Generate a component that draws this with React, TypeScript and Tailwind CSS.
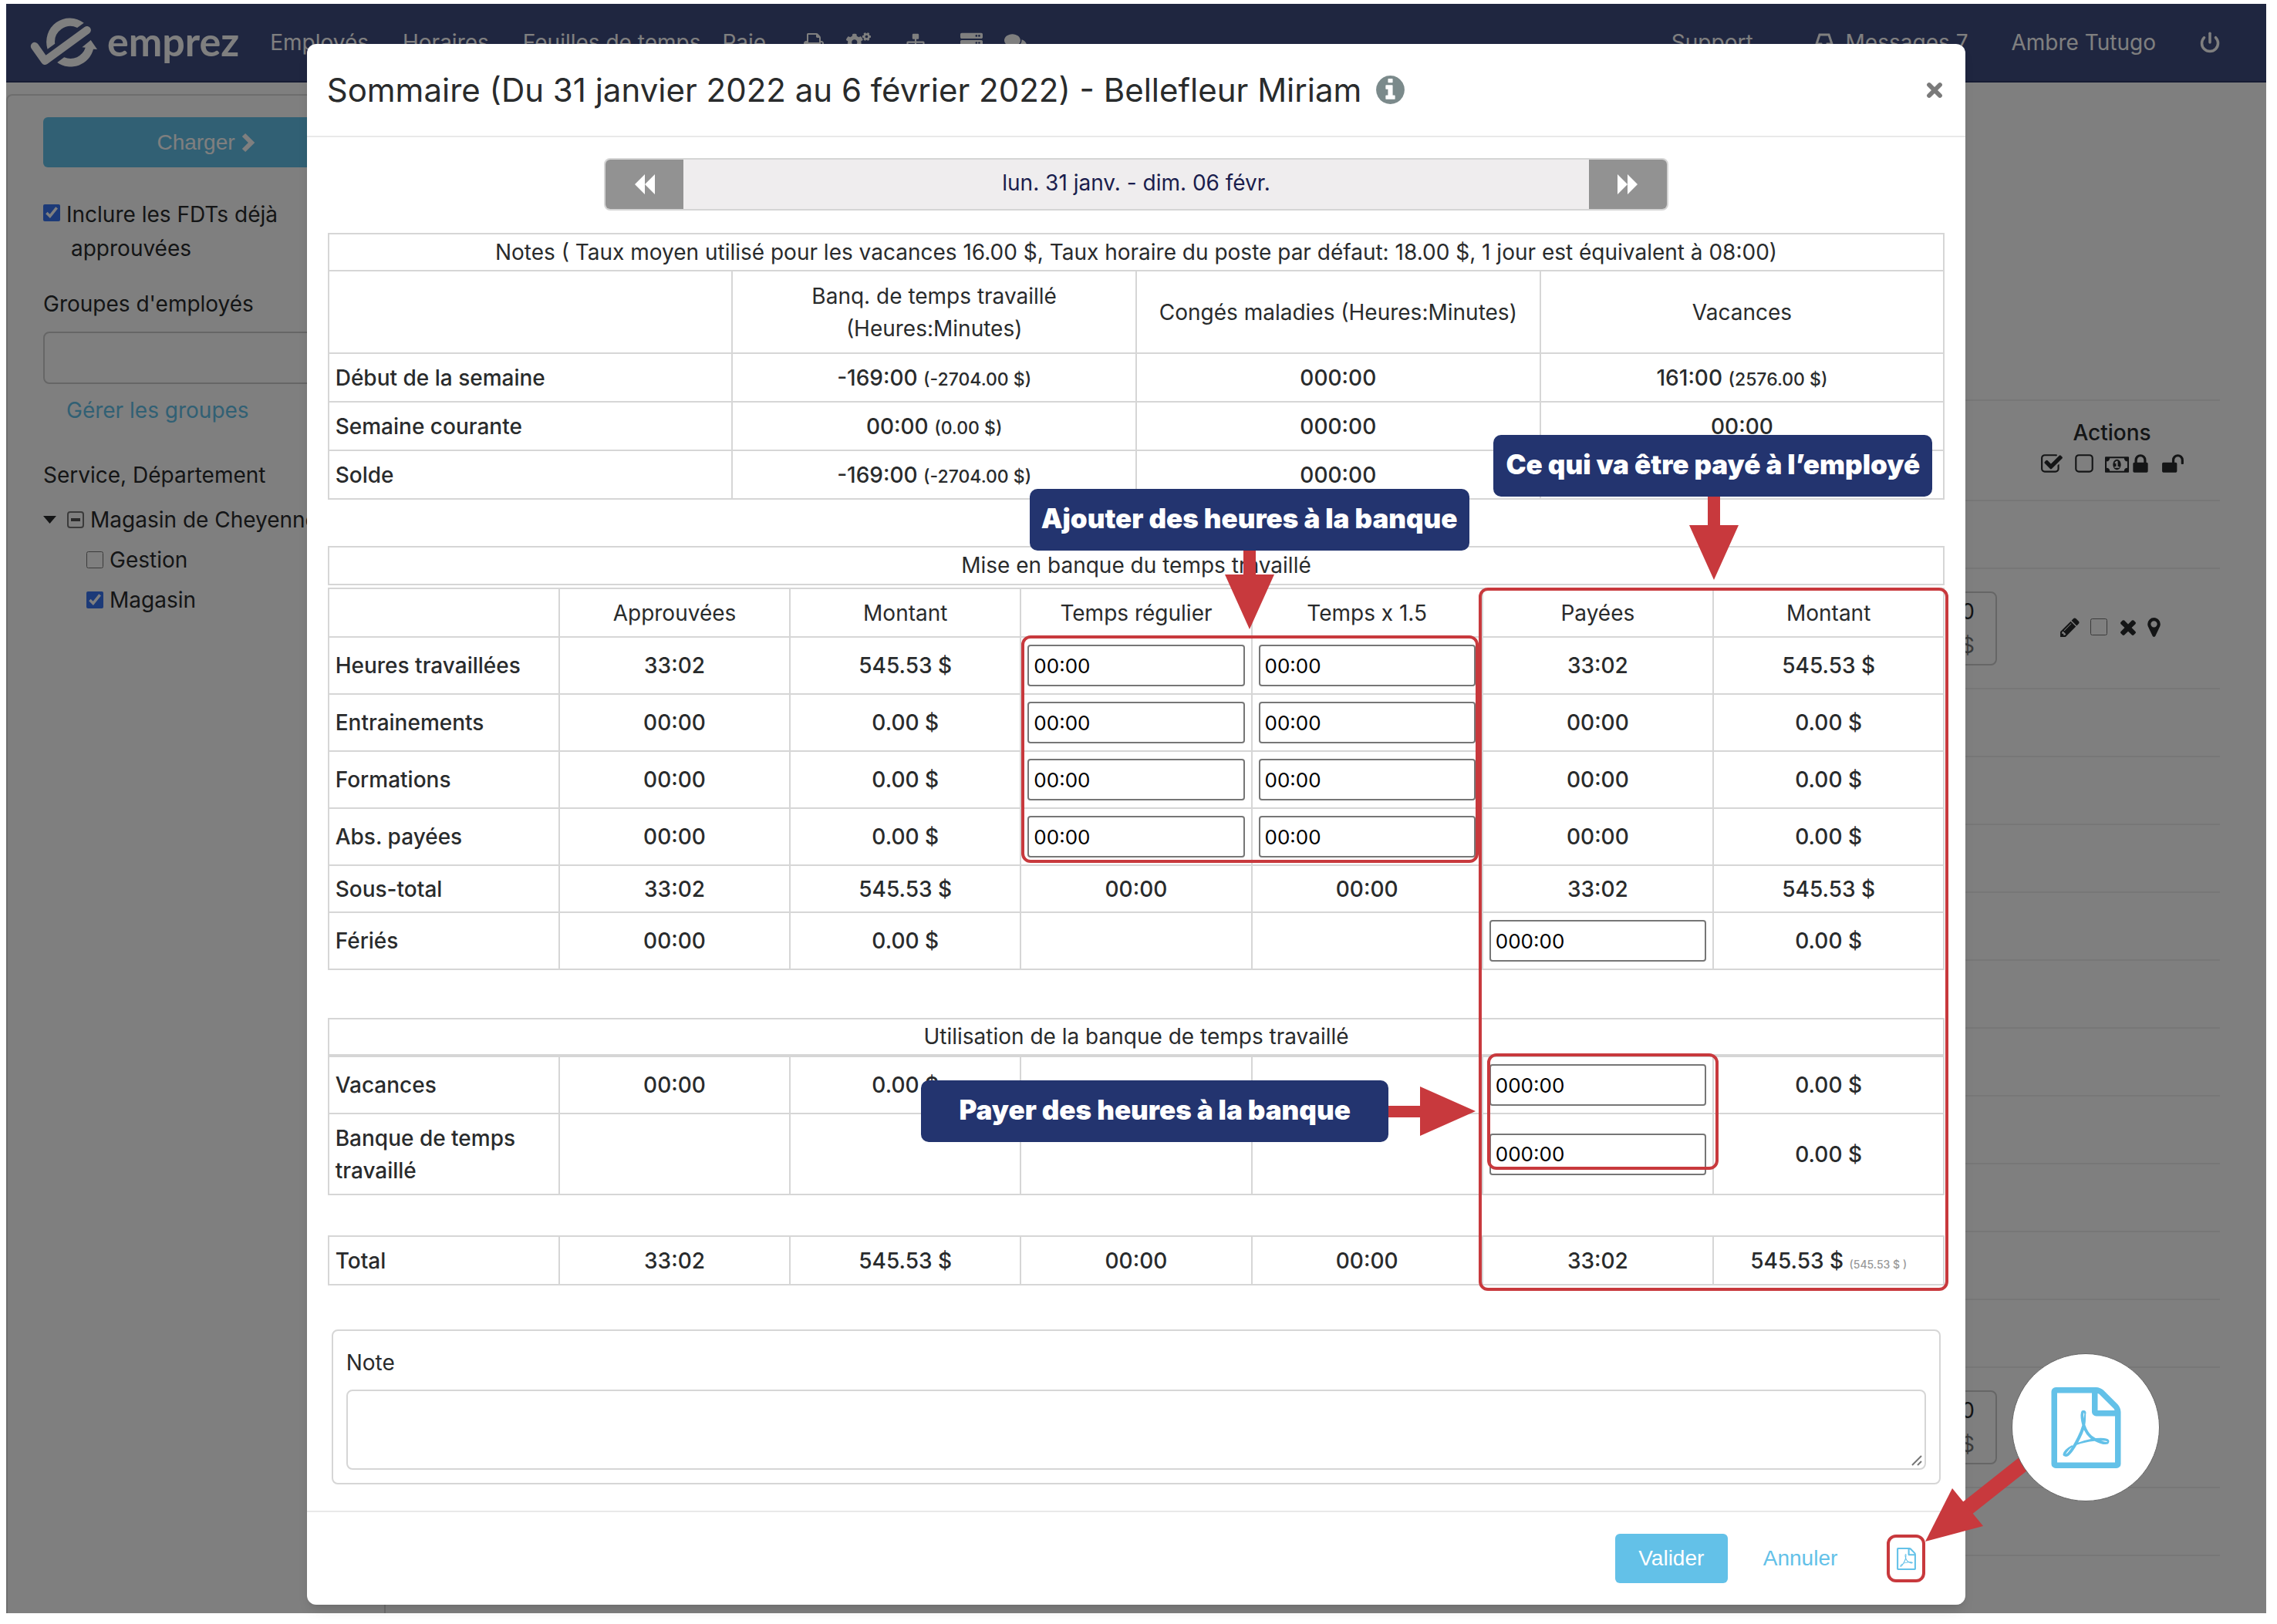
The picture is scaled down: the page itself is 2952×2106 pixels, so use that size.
import React from "react";
import type { ReactNode } from "react";
import { Power, X } from "lucide-react";
import { FaCogs, FaComments, FaServer, FaSitemap } from "react-icons/fa";

const ICONS = {
  checkSquare:
    "M1472 930v318q0 119-84.5 203.5t-203.5 84.5h-832q-119 0-203.5-84.5t-84.5-203.5v-832q0-119 84.5-203.5t203.5-84.5h832q63 0 117 25 15 7 18 23 3 17-9 29l-49 49q-10 10-23 10-3 0-9-2-23-6-45-6h-832q-66 0-113 47t-47 113v832q0 66 47 113t113 47h832q66 0 113-47t47-113v-254q0-13 9-22l64-64q10-10 23-10 6 0 12 3 20 8 20 29zm231-489l-814 814q-24 24-57 24t-57-24l-430-430q-24-24-24-57t24-57l110-110q24-24 57-24t57 24l263 263 647-647q24-24 57-24t57 24l110 110q24 24 24 57t-24 57z",
  square:
    "M1312 256h-832q-66 0-113 47t-47 113v832q0 66 47 113t113 47h832q66 0 113-47t47-113v-832q0-66-47-113t-113-47zm288 160v832q0 119-84.5 203.5t-203.5 84.5h-832q-119 0-203.5-84.5t-84.5-203.5v-832q0-119 84.5-203.5t203.5-84.5h832q119 0 203.5 84.5t84.5 203.5z",
  money:
    "M768 1152h384v-96h-128v-448h-114l-148 137 77 80q42-37 55-57h2v288h-128v96zm512-256q0 70-21 142t-59.5 134-101.5 101-138 39-138-39-101.5-101-59.5-134-21-142 21-142 59.5-134 101.5-101 138-39 138 39 101.5 101 59.5 134 21 142zm512 256v-512q-106 0-181-75t-75-181h-1152q0 106-75 181t-181 75v512q106 0 181 75t75 181h1152q0-106 75-181t181-75zm128-832v1152q0 26-19 45t-45 19h-1792q-26 0-45-19t-19-45v-1152q0-26 19-45t45-19h1792q26 0 45 19t19 45z",
  lock: "M640 768h512v-192q0-106-75-181t-181-75-181 75-75 181v192zm832 96v576q0 40-28 68t-68 28h-960q-40 0-68-28t-28-68v-576q0-40 28-68t68-28h32v-192q0-184 132-316t316-132 316 132 132 316v192h32q40 0 68 28t28 68z",
  unlock:
    "M1728 576v256q0 26-19 45t-45 19h-64q-26 0-45-19t-19-45v-256q0-106-75-181t-181-75-181 75-75 181v192h96q40 0 68 28t28 68v576q0 40-28 68t-68 28h-960q-40 0-68-28t-28-68v-576q0-40 28-68t68-28h672v-192q0-185 131.5-316.5t316.5-131.5 316.5 131.5 131.5 316.5z",
  pencil:
    "M491 1536l91-91-235-235-91 91v107h128v128h107zm523-928q0-22-22-22-10 0-17 7l-542 542q-7 7-7 17 0 22 22 22 10 0 17-7l542-542q7-7 7-17zm-54-192l416 416-832 832h-416v-416zm683 96q0 53-37 90l-166 166-416-416 166-165q36-38 90-38 53 0 91 38l235 234q37 39 37 91z",
  times:
    "M1490 1322q0 40-28 68l-136 136q-28 28-68 28t-68-28l-294-294-294 294q-28 28-68 28t-68-28l-136-136q-28-28-28-68t28-68l294-294-294-294q-28-28-28-68t28-68l136-136q28-28 68-28t68 28l294 294 294-294q28-28 68-28t68 28l136 136q28 28 28 68t-28 68l-294 294 294 294q28 28 28 68z",
  marker:
    "M1152 640q0-106-75-181t-181-75-181 75-75 181 75 181 181 75 181-75 75-181zm256 0q0 109-33 179l-364 774q-16 33-47.5 52t-67.5 19-67.5-19-46.5-52l-365-774q-33-70-33-179 0-212 150-362t362-150 362 150 150 362z",
  info: "M1152 1376v-160q0-14-9-23t-23-9h-96v-512q0-14-9-23t-23-9h-320q-14 0-23 9t-9 23v160q0 14 9 23t23 9h96v320h-96q-14 0-23 9t-9 23v160q0 14 9 23t23 9h448q14 0 23-9t9-23zm-128-896v-160q0-14-9-23t-23-9h-192q-14 0-23 9t-9 23v160q0 14 9 23t23 9h192q14 0 23-9t9-23zm640 416q0 209-103 385.5t-279.5 279.5-385.5 103-385.5-103-279.5-279.5-103-385.5 103-385.5 279.5-279.5 385.5-103 385.5 103 279.5 279.5 103 385.5z",
  print:
    "M448 1536h896v-256h-896v256zm0-640h896v-384h-160q-40 0-68-28t-28-68v-160h-640v640zm1152 64q0-26-19-45t-45-19-45 19-19 45 19 45 45 19 45-19 19-45zm128 0v416q0 13-9.500 22.500t-22.500 9.500h-224v160q0 40-28 68t-68 28h-960q-40 0-68-28t-28-68v-160h-224q-13 0-22.500-9.500t-9.500-22.500v-416q0-79 56.500-135.500t135.500-56.500h64v-544q0-40 28-68t68-28h672q40 0 88 20t76 48l152 152q28 28 48 76t20 88v256h64q79 0 135.500 56.500t56.500 135.500z",
  pdf: "M1596 380q28 28 48 76t20 88v1152q0 40-28 68t-68 28h-1344q-40 0-68-28t-28-68v-1600q0-40 28-68t68-28h896q40 0 88 20t76 48zm-444-244v376h376q-10-29-22-41l-313-313q-12-12-41-22zm384 1528v-1024h-416q-40 0-68-28t-28-68v-416h-768v1536h1280zm-514-593q33 26 84 56 59-7 117-7 147 0 177 49 16 22 2 52 0 1-1 2l-2 2v1q-6 38-71 38-48 0-115-20t-130-53q-221 24-392 83-153 262-242 262-15 0-28-7l-24-12q-1-1-6-5-10-10-6-36 9-40 56-91.5t132-96.5q14-9 23 6 2 2 2 4 52-85 107-197 68-136 104-262-24-82-30.5-159.5t6.5-127.5q11-40 42-40h22q23 0 35 15 18 21 9 68-2 6-4 8 1 3 1 8v30q-2 123-14 192 55 164 146 238zm-576 411q52-24 137-158-51 40-87.5 84t-49.500 74zm398-920q-15 42-2 132 1-7 7-44 0-3 7-43 1-4 4-8-1-1-1-2-1-2-1-3-1-22-13-36 0 1-1 2v2zm-124 661q135-54 284-81-2-1-13-9.5t-16-13.500q-76-67-127-176-27 86-83 197-30 56-45 83zm646-16q-24-24-140-24 76 28 124 28 14 0 18-1 0-1-2-3z",
};

function Glyph({ name, className, wide }: { name: keyof typeof ICONS; className: string; wide?: boolean }) {
  return (
    <svg viewBox={wide ? "0 0 1920 1792" : "0 0 1792 1792"} fill="currentColor" className={className} aria-hidden="true">
      <path d={ICONS[name]} />
    </svg>
  );
}

function Logo() {
  return (
    <a href="#" className="flex items-center gap-3 text-white" aria-label="emprez">
      <svg viewBox="115 65 265 195" className="h-[65px] w-[88px]" aria-hidden="true">
        <path
          d="M325 85 A91 93 0 0 0 183 187 L212 166 A61 61 0 0 1 299 104 Z"
          fill="currentColor"
        />
        <path
          d="M221 239 L248 219 A61 61 0 0 0 331 181 L318 180 L352 152 L377 188 L362 187 A91 91 0 0 1 221 239 Z"
          fill="currentColor"
        />
        <path
          d="M133 176 L173 233 L337 113"
          fill="none"
          stroke="currentColor"
          strokeWidth="31"
          strokeLinecap="round"
          strokeLinejoin="round"
        />
      </svg>
      <span className="-mt-1 font-['Lato',sans-serif] text-[52px] leading-[64px] font-bold">emprez</span>
    </a>
  );
}

function NavBar() {
  return (
    <header className="flex h-[102px] items-center justify-between border-b-2 border-[#2c3766] bg-[#3e4c80] pr-[59px] pl-[31px] text-white">
      <nav className="flex items-center">
        <Logo />
        <a href="#" className="ml-10">Employés</a>
        <a href="#" className="ml-11">Horaires</a>
        <a href="#" className="ml-11">Feuilles de temps</a>
        <a href="#" className="ml-7">Paie</a>
        <a href="#" className="ml-12" aria-label="Imprimer">
          <Glyph name="print" className="size-[28px]" />
        </a>
        <a href="#" className="ml-7" aria-label="Paramètres">
          <FaCogs className="size-[32px]" />
        </a>
        <a href="#" className="ml-11" aria-label="Organigramme">
          <FaSitemap className="size-[28px]" />
        </a>
        <a href="#" className="ml-11" aria-label="Serveur">
          <FaServer className="size-[29px]" />
        </a>
        <a href="#" className="ml-7" aria-label="Discussions">
          <FaComments className="size-[29px]" />
        </a>
      </nav>
      <nav className="flex items-center">
        <a href="#">Support</a>
        <a href="#" className="ml-20 flex items-center gap-4">
          <svg viewBox="0 0 24 24" className="size-[24px]" fill="none" stroke="currentColor" strokeWidth="3" aria-hidden="true">
            <path d="M2 22 V14 L6 2 H18 L22 14 V22 Z M2 14 H8 L9 17 H15 L16 14 H22" />
          </svg>
          Messages 7
        </a>
        <a href="#" className="ml-14">Ambre Tutugo</a>
        <button type="button" className="ml-14" aria-label="Déconnexion">
          <Power className="size-[28px]" strokeWidth={3} />
        </button>
      </nav>
    </header>
  );
}

function Check({ id, label, checked, mixed }: { id: string; label: string; checked?: boolean; mixed?: boolean }) {
  return (
    <div className="flex items-center gap-2">
      {mixed ? (
        <input
          id={id}
          type="checkbox"
          aria-checked="mixed"
          className="grid size-[22px] shrink-0 appearance-none place-content-center rounded border-2 border-[#767676] before:h-[4px] before:w-3 before:bg-[#555] before:content-['']"
        />
      ) : (
        <input id={id} type="checkbox" defaultChecked={checked} className="size-[22px] shrink-0 accent-[#3874f0]" />
      )}
      <label htmlFor={id} className="whitespace-nowrap">{label}</label>
    </div>
  );
}

function Sidebar() {
  return (
    <aside className="w-[492px] shrink-0 rounded-tl-lg border-2 border-b-0 border-[#dadada] pt-[28px] pr-5 pl-[46px]">
      <button
        type="button"
        className="flex h-[65px] w-full items-center justify-center gap-2 rounded-md bg-[#63c1e8] font-['Liberation_Sans',sans-serif] text-white"
      >
        Charger
        <svg viewBox="0 0 18 26" className="h-[26px] w-[18px]" fill="none" stroke="currentColor" strokeWidth="6" aria-hidden="true">
          <path d="M3 3 L13 13 L3 23" />
        </svg>
      </button>
      <div className="mt-[39px] flex items-start gap-2 leading-[44px]">
        <input id="fdt" type="checkbox" defaultChecked className="mt-[9px] size-[22px] shrink-0 accent-[#3874f0]" />
        <label htmlFor="fdt">
          Inclure les FDTs déjà
          <br />
          <span className="pl-1.5">approuvées</span>
        </label>
      </div>
      <label htmlFor="groupes" className="mt-[28px] block leading-[44px]">
        Groupes d'employés
      </label>
      <input id="groupes" type="text" className="mt-[14px] block h-[68px] w-full rounded-lg border-2 border-[#ccc] px-3" />
      <a href="#" className="mt-[12px] ml-[30px] block leading-[44px] text-[#63c1e8]">
        Gérer les groupes
      </a>
      <h2 className="mt-[40px] leading-[44px]">Service, Département</h2>
      <div className="mt-[14px] flex items-center gap-[14px] leading-[44px]">
        <svg viewBox="0 0 17 10" className="h-[10px] w-[17px] shrink-0" aria-hidden="true">
          <path d="M0 0 H17 L8.5 10 Z" fill="currentColor" />
        </svg>
        <Check id="cheyenne" label="Magasin de Cheyenne" mixed />
      </div>
      <div className="mt-2 ml-[56px] leading-[44px]">
        <Check id="gestion" label="Gestion" />
      </div>
      <div className="mt-2 ml-[56px] leading-[44px]">
        <Check id="magasin" label="Magasin" checked />
      </div>
    </aside>
  );
}

function AmountBox() {
  return (
    <div className="mr-[9px] ml-auto h-[96px] w-[160px] rounded-lg border-2 border-[#ccc] pt-[2px] pr-[27px] text-right leading-[44px]">
      <div>0.00</div>
      <div className="text-[#777]">$</div>
    </div>
  );
}

function Timesheets() {
  const plain = (count: number, from: number) =>
    Array.from({ length: count }, (_, i) => (
      <tr key={from + i} className="border-t-2 border-[#efefef]">
        <td className="h-[88px]" />
        <td />
      </tr>
    ));
  return (
    <main className="min-w-0 flex-1 pt-[396px] pr-[60px]">
      <table className="w-full table-fixed border-collapse">
        <colgroup>
          <col />
          <col className="w-[280px]" />
        </colgroup>
        <tbody>
          <tr className="border-t-2 border-[#efefef]">
            <td />
            <th className="h-[130px] pb-2 font-medium">
              <div className="leading-[36px]">Actions</div>
              <div className="mt-2 flex items-center justify-center gap-3">
                <Glyph name="checkSquare" className="size-[30px]" />
                <Glyph name="square" className="size-[30px]" />
                <Glyph name="money" wide className="h-[29px] w-[31px]" />
                <Glyph name="lock" className="-ml-3 size-[30px]" />
                <Glyph name="unlock" className="size-[30px]" />
              </div>
            </th>
          </tr>
          {plain(1, 0)}
          <tr className="border-t-2 border-[#efefef]">
            <td className="h-[156px] align-middle">
              <AmountBox />
            </td>
            <td>
              <div className="flex items-center justify-center gap-3 pb-1">
                <Glyph name="pencil" className="size-[29px]" />
                <input type="checkbox" aria-label="Sélectionner la feuille" className="size-[22px]" />
                <Glyph name="times" className="size-[30px]" />
                <Glyph name="marker" className="-ml-2 size-[29px]" />
              </div>
            </td>
          </tr>
          {plain(10, 10)}
          <tr className="border-t-2 border-[#efefef]">
            <td className="h-[156px] align-middle">
              <AmountBox />
            </td>
            <td />
          </tr>
          <tr className="border-t-2 border-[#efefef]">
            <td className="h-[88px]" />
            <td />
          </tr>
          <tr className="border-t-2 border-[#efefef]">
            <td className="h-[60px]" />
            <td />
          </tr>
        </tbody>
      </table>
    </main>
  );
}

const CELL = "border-2 border-[#d6d6d6] px-2";

function HourInput({ value, label }: { value: string; label: string }) {
  return (
    <input
      type="text"
      defaultValue={value}
      aria-label={label}
      className="block h-[54px] w-full rounded border-2 border-[#767676] bg-white px-1.5 text-[26px] font-normal text-black"
    />
  );
}

function Row({ label, cells, height }: { label: string; cells: ReactNode[]; height: string }) {
  return (
    <tr className={height}>
      <th scope="row" className={`${CELL} text-left leading-[42px] font-medium`}>
        {label}
      </th>
      {cells.map((cell, i) => (
        <td key={i} className={`${CELL} text-center font-medium`}>
          {cell}
        </td>
      ))}
    </tr>
  );
}

function Small({ children }: { children: ReactNode }) {
  return <span className="text-[23px]">{children}</span>;
}

function BalanceTable() {
  const rows: [string, ReactNode, ReactNode, ReactNode][] = [
    ["Début de la semaine", <>-169:00 <Small>(-2704.00 $)</Small></>, "000:00", <>161:00 <Small>(2576.00 $)</Small></>],
    ["Semaine courante", <>00:00 <Small>(0.00 $)</Small></>, "000:00", "00:00"],
    ["Solde", <>-169:00 <Small>(-2704.00 $)</Small></>, "000:00", ""],
  ];
  return (
    <table className="w-full table-fixed border-collapse">
      <thead>
        <tr>
          <th colSpan={4} className={`${CELL} h-[48px] leading-[42px] font-normal`}>
            Notes ( Taux moyen utilisé pour les vacances 16.00 $, Taux horaire du poste par défaut: 18.00 $, 1 jour est
            équivalent à 08:00)
          </th>
        </tr>
        <tr className="h-[107px]">
          <td className={CELL} />
          <th className={`${CELL} leading-[42px] font-normal`}>
            Banq. de temps travaillé
            <br />
            (Heures:Minutes)
          </th>
          <th className={`${CELL} font-normal`}>Congés maladies (Heures:Minutes)</th>
          <th className={`${CELL} font-normal`}>Vacances</th>
        </tr>
      </thead>
      <tbody>
        {rows.map(([label, ...cells]) => (
          <Row key={label} label={label} cells={cells} height="h-[63px]" />
        ))}
      </tbody>
    </table>
  );
}

function BankingTable() {
  const heads = ["Approuvées", "Montant", "Temps régulier", "Temps x 1.5", "Payées", "Montant"];
  const rows = [
    ["Heures travaillées", "33:02", "545.53 $"],
    ["Entrainements", "00:00", "0.00 $"],
    ["Formations", "00:00", "0.00 $"],
    ["Abs. payées", "00:00", "0.00 $"],
  ];
  return (
    <table className="mt-[3px] w-full table-fixed border-collapse">
      <thead>
        <tr className="h-[63px]">
          <td className={CELL} />
          {heads.map((head, i) => (
            <th key={i} className={`${CELL} font-normal`}>
              {head}
            </th>
          ))}
        </tr>
      </thead>
      <tbody>
        {rows.map(([label, hours, amount]) => (
          <Row
            key={label}
            label={label}
            height="h-[74px]"
            cells={[
              hours,
              amount,
              <HourInput value="00:00" label={`${label} temps régulier`} />,
              <HourInput value="00:00" label={`${label} temps x 1.5`} />,
              hours,
              amount,
            ]}
          />
        ))}
        <Row label="Sous-total" height="h-[61px]" cells={["33:02", "545.53 $", "00:00", "00:00", "33:02", "545.53 $"]} />
        <Row
          label="Fériés"
          height="h-[74px]"
          cells={["00:00", "0.00 $", "", "", <HourInput value="000:00" label="Fériés payées" />, "0.00 $"]}
        />
      </tbody>
    </table>
  );
}

function Callout({ children, className }: { children: ReactNode; className: string }) {
  return (
    <div
      className={`absolute flex h-[80px] items-center justify-center rounded-[10px] bg-[#23346f] pb-1 text-[35px] font-black whitespace-nowrap text-white ${className}`}
    >
      {children}
    </div>
  );
}

function DownArrow({ className, stem }: { className: string; stem: number }) {
  const height = stem + 71;
  return (
    <svg viewBox={`0 0 64 ${height}`} width="64" height={height} className={`absolute ${className}`} aria-hidden="true">
      <path d={`M24 0 H40 V${stem} H64 L32 ${height} L0 ${stem} H24 Z`} fill="#c8393d" />
    </svg>
  );
}

function Annotations() {
  const frame = "pointer-events-none absolute border-4 border-[#c8393d]";
  return (
    <>
      <div className={`${frame} top-[460px] -right-[5px] -bottom-[7px] left-[71.2%] rounded-xl`} />
      <div className={`${frame} top-[522px] left-[42.9%] h-[295px] w-[28.3%] rounded-xl`} />
      <div className={`${frame} top-[1064px] left-[71.7%] h-[151px] w-[14.3%] rounded-xl`} />
      <Callout className="top-[262px] left-[72.1%] w-[569px]">Ce qui va être payé à l’employé</Callout>
      <DownArrow className="top-[342px] left-[84.2%]" stem={37} />
      <Callout className="top-[332px] left-[43.4%] w-[570px]">Ajouter des heures à la banque</Callout>
      <DownArrow className="top-[412px] left-[55.5%]" stem={31} />
      <Callout className="top-[1099px] left-[36.7%] w-[606px]">Payer des heures à la banque</Callout>
      <svg viewBox="0 0 113 64" className="absolute top-[1107px] left-[65.6%] h-[64px] w-[113px]" aria-hidden="true">
        <path d="M0 25 H41 V0 L113 32 L41 64 V40 H0 Z" fill="#c8393d" />
      </svg>
    </>
  );
}

function WeekPicker() {
  return (
    <div className="mx-auto flex h-[68px] w-[65.8%] overflow-hidden rounded-lg border-2 border-[#d5d5d5] bg-[#efedee] text-[#1a1d4d]">
      <button type="button" aria-label="Semaine précédente" className="grid w-[101px] place-items-center bg-[#929292] text-white">
        <svg viewBox="0 0 26 26" className="size-[26px]" fill="currentColor" aria-hidden="true">
          <path d="M13 0 V26 L0 13 Z M26 0 V26 L13 13 Z" />
        </svg>
      </button>
      <div className="flex flex-1 items-center justify-center pb-1">lun. 31 janv. - dim. 06 févr.</div>
      <button type="button" aria-label="Semaine suivante" className="grid w-[101px] place-items-center bg-[#929292] text-white">
        <svg viewBox="0 0 26 26" className="size-[26px]" fill="currentColor" aria-hidden="true">
          <path d="M0 0 L13 13 L0 26 Z M13 0 L26 13 L13 26 Z" />
        </svg>
      </button>
    </div>
  );
}

function SummaryDialog() {
  const title = "flex items-center justify-center border-2 border-[#d6d6d6] pb-0.5 leading-[42px]";
  return (
    <div role="dialog" aria-labelledby="titre" className="relative w-[73.4%] rounded-xl bg-white shadow-lg">
      <div className="flex h-[121px] items-center justify-between border-b-2 border-[#e9e9e9] pr-[26px] pl-[26px]">
        <h1 id="titre" className="flex items-center gap-4 text-[42px]">
          Sommaire (Du 31 janvier 2022 au 6 février 2022) - Bellefleur Miriam
          <Glyph name="info" className="size-[43px] text-[#7b8a8b]" />
        </h1>
        <button type="button" aria-label="Fermer" className="text-[#7a7a7a]">
          <X className="size-[28px]" strokeWidth={5} />
        </button>
      </div>

      <div className="px-[27px] pt-[27px] pb-[34px]">
        <WeekPicker />
        <div className="relative mt-[29px]">
          <BalanceTable />
          <div className={`${title} mt-[60px] h-[51px]`}>Mise en banque du temps travaillé</div>
          <BankingTable />
          <div className={`${title} mt-[62px] h-[49px]`}>Utilisation de la banque de temps travaillé</div>
          <table className="w-full table-fixed border-collapse">
            <tbody>
              <Row
                label="Vacances"
                height="h-[74px]"
                cells={["00:00", "0.00 $", "", "", <HourInput value="000:00" label="Vacances payées" />, "0.00 $"]}
              />
              <Row
                label="Banque de temps travaillé"
                height="h-[105px]"
                cells={["", "", "", "", <HourInput value="000:00" label="Banque de temps payée" />, "0.00 $"]}
              />
            </tbody>
          </table>
          <table className="mt-[52px] w-full table-fixed border-collapse">
            <tbody>
              <Row
                label="Total"
                height="h-[63px]"
                cells={[
                  "33:02",
                  "545.53 $",
                  "00:00",
                  "00:00",
                  "33:02",
                  <>
                    545.53 $ <span className="text-[14px] text-[#999]">(545.53 $ )</span>
                  </>,
                ]}
              />
            </tbody>
          </table>
          <Annotations />
        </div>

        <div className="relative mx-[5px] mt-[57px] rounded-lg border-2 border-[#d6d6d6] px-[17px] pt-[20px] pb-[17px]">
          <label htmlFor="note" className="block leading-[42px]">
            Note
          </label>
          <textarea
            id="note"
            className="mt-[14px] block h-[104px] w-full resize-none rounded-lg border-2 border-[#d6d6d6] p-3"
          />
          <svg viewBox="0 0 14 14" className="absolute right-[22px] bottom-[22px] size-[14px]" aria-hidden="true">
            <path d="M1 13 L13 1 M8 13 L13 8" stroke="#777" strokeWidth="2" />
          </svg>
        </div>
      </div>

      <div className="flex items-center justify-end border-t-2 border-[#e9e9e9] pt-[28px] pr-[52px] pb-[28px] font-['Liberation_Sans',sans-serif]">
        <button type="button" className="h-[64px] w-[146px] rounded-md bg-[#63c1e8] text-white">
          Valider
        </button>
        <button type="button" className="ml-[46px] text-[#63c1e8]">
          Annuler
        </button>
        <a
          href="#"
          aria-label="Exporter en PDF"
          className="ml-[64px] grid h-[62px] w-[50px] place-items-center rounded-xl border-4 border-[#c8393d] text-[#63c1e8]"
        >
          <Glyph name="pdf" className="size-[29px]" />
        </a>
      </div>

      <svg
        viewBox="0 0 150 120"
        className="absolute bottom-[79px] left-full -ml-[58px] h-[120px] w-[150px]"
        aria-hidden="true"
      >
        <path d="M59 75 L136 14" stroke="#c8393d" strokeWidth="20" />
        <path d="M6 117 L41 48 L81 97 Z" fill="#c8393d" />
      </svg>
      <div className="absolute bottom-[134px] left-full ml-[60px] grid size-[192px] place-items-center rounded-full border border-[#666] bg-white text-[#63c1e8]">
        <Glyph name="pdf" className="size-[105px]" />
      </div>
    </div>
  );
}

export default function App() {
  return (
    <div className="flex min-h-screen bg-white pt-[5px] pr-[14px] pb-[14px] pl-2 font-['Inter',sans-serif] text-[28px] text-[#292b2c]">
      <div className="relative flex flex-1 flex-col">
        <NavBar />
        <div className="flex flex-1 pt-[15px]">
          <Sidebar />
          <Timesheets />
        </div>
        <div className="absolute inset-0 flex items-start justify-center bg-black/50 pt-[52px]">
          <SummaryDialog />
        </div>
      </div>
    </div>
  );
}
